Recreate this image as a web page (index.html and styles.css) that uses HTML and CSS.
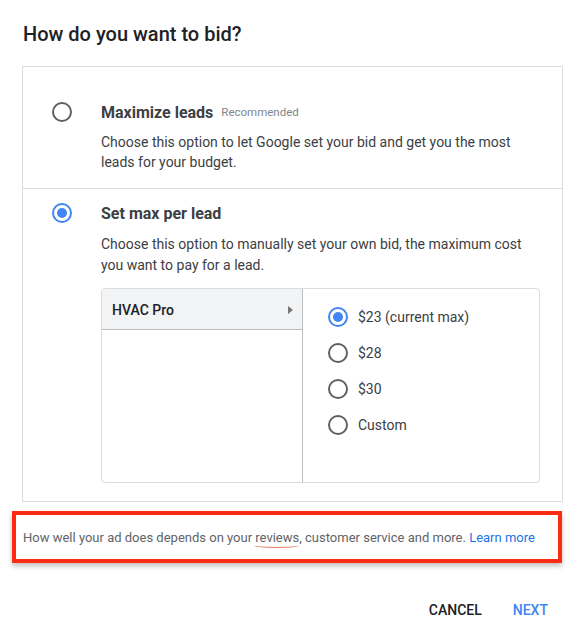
FILE: index.html
```html
<!DOCTYPE html>
<html>
    <head>
        <title> Bid </title>
        <link rel="stylesheet" href="styles.css">
    </head>
    <body>
        <div class="dialog">
            <h2 class="title">How do you want to bid?</h2>

            <div class="options">
                <div class="option first">
                    <div class="option-head">
                        <span class="radio"></span>
                        <span class="option-name">Maximize leads</span>
                        <span class="tag">Recommended</span>
                    </div>
                    <p class="desc">Choose this option to let Google set your bid and get you the most leads for your budget.</p>
                </div>
                <div class="option last">
                    <div class="option-head">
                        <span class="radio checked"></span>
                        <span class="option-name">Set max per lead</span>
                    </div>
                    <p class="desc">Choose this option to manually set your own bid, the maximum cost you want to pay for a lead.</p>

                    <div class="picker">
                        <div class="picker-left">
                            <div class="service">
                                <span>HVAC Pro</span>
                                <span class="arrow"></span>
                            </div>
                        </div>
                        <div class="picker-right">
                            <div class="choice"><span class="radio checked"></span> $23 (current max)</div>
                            <div class="choice"><span class="radio"></span> $28</div>
                            <div class="choice"><span class="radio"></span> $30</div>
                            <div class="choice"><span class="radio"></span> Custom</div>
                        </div>
                    </div>
                </div>
            </div>

            <div class="note">
                <p class="note-text">How well your ad does depends on your <span class="squiggle">reviews</span>, customer service and more. <a href="#" class="link">Learn more</a></p>
            </div>

            <div class="actions">
                <button class="btn">CANCEL</button>
                <button class="btn primary">NEXT</button>
            </div>
        </div>
    </body>
</html>
```

FILE: styles.css
```css
body {
    margin: 0;
    font-family: Roboto, Arial, sans-serif;
    background-color: #ffffff;
    color: #3c4043;
}

.dialog {
    width: 586px;
}

.title {
    margin: 0;
    padding: 22px 0 0 23px;
    font-size: 20px;
    font-weight: 500;
    line-height: 24px;
    color: #202124;
}

.options {
    margin: 20px 0 0 22px;
    width: 539px;
    border: 1px solid #dadce0;
}

.option {
    padding: 14px 22px 16px 29px;
}

.option.first {
    padding-top: 35px;
    border-bottom: 1px solid #dadce0;
}

.option.last {
    padding-bottom: 18px;
}

.option-head {
    display: flex;
    align-items: center;
    height: 20px;
}

.option-name {
    margin-left: 29px;
    font-size: 16px;
    font-weight: 700;
    color: #3c4043;
}

.tag {
    margin-left: 8px;
    font-size: 11.5px;
    color: #80868b;
}

.desc {
    margin: 10px 0 0 49px;
    font-size: 14px;
    line-height: 20px;
    color: #3c4043;
}

.last .desc {
    margin-top: 11px;
    line-height: 21px;
}

.radio {
    width: 20px;
    height: 20px;
    border: 2px solid #616161;
    border-radius: 50%;
    box-sizing: border-box;
    flex-shrink: 0;
    display: flex;
    justify-content: center;
    align-items: center;
}

.radio.checked {
    border-color: #4285f4;
}

.radio.checked::after {
    content: '';
    width: 10px;
    height: 10px;
    border-radius: 50%;
    background-color: #4285f4;
}

.picker {
    display: flex;
    margin: 12px 0 0 49px;
    height: 195px;
    box-sizing: border-box;
    border: 1px solid #dadce0;
    border-radius: 4px;
    overflow: hidden;
}

.picker-left {
    width: 200px;
    border-right: 1px solid #bdbdbd;
}

.service {
    display: flex;
    justify-content: space-between;
    align-items: center;
    height: 41px;
    box-sizing: border-box;
    padding: 2px 9px 0 10px;
    background-color: #f1f3f4;
    border-bottom: 1px solid #bdbdbd;
    font-size: 14px;
    font-weight: 500;
    color: #202124;
}

.arrow {
    width: 0;
    height: 0;
    border-top: 4px solid transparent;
    border-bottom: 4px solid transparent;
    border-left: 5px solid #757575;
}

.picker-right {
    padding: 10px 0 0 25px;
}

.choice {
    display: flex;
    align-items: center;
    gap: 10px;
    height: 36px;
    font-size: 14px;
    color: #3c4043;
}

.note {
    margin: 9px 0 0 12px;
    width: 550px;
    height: 52px;
    box-sizing: border-box;
    padding: 0 0 0 7px;
    display: flex;
    align-items: center;
    border: 4px solid #ff2a12;
    box-shadow: 0 3px 5px rgba(0, 0, 0, 0.25);
}

.note-text {
    margin: 0;
    font-size: 13px;
    color: #5f6368;
    white-space: nowrap;
}

.squiggle {
    position: relative;
}

.squiggle::after {
    content: '';
    position: absolute;
    left: -1px;
    right: 0;
    bottom: -3px;
    height: 4px;
    border-bottom: 1px solid #e8776c;
    border-radius: 0 0 50% 50%;
}

.link {
    color: #1a73e8;
    text-decoration: none;
}

.actions {
    display: flex;
    justify-content: flex-end;
    gap: 31px;
    margin-top: 39px;
    padding-right: 38px;
}

.btn {
    border: none;
    background: none;
    padding: 0;
    font-family: Roboto, Arial, sans-serif;
    font-size: 14px;
    font-weight: 500;
    color: #202124;
    cursor: pointer;
}

.btn.primary {
    color: #4285f4;
}
```
